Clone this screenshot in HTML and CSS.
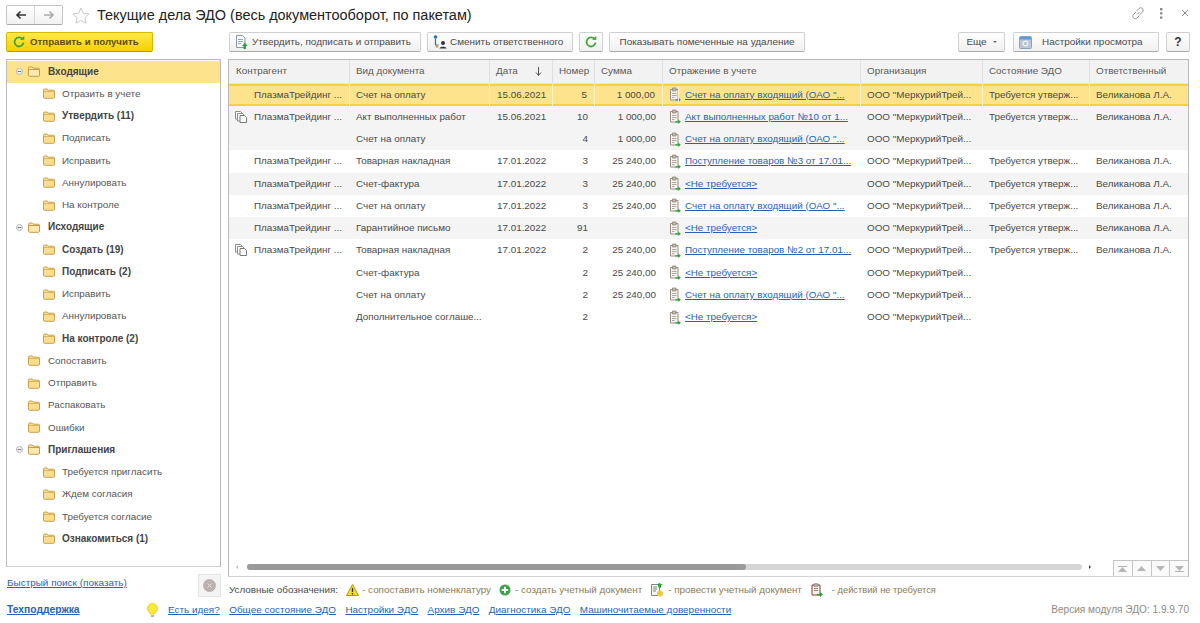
FILE: index.html
```html
<!DOCTYPE html>
<html lang="ru">
<head>
<meta charset="utf-8">
<title>Текущие дела ЭДО</title>
<link rel="stylesheet" href="styles.css">
</head>
<body>
<svg class="defs" width="0" height="0" aria-hidden="true">
  <symbol id="folder" viewBox="0 0 12 11">
    <path d="M.5 2.200c0-.7.4-1.200 1.100-1.200h2.600l1.100 1.200h5.100c.7 0 1.100.4 1.100 1v5.900c0 .7-.4 1.200-1.100 1.200H1.600C.9 10.300.5 9.800.5 9.100z" fill="#fbdd8e" stroke="#c9a04e"/>
    <path d="M1 3.500h10" stroke="#d9b565" stroke-width="1"/>
  </symbol>
  <symbol id="folder-open" viewBox="0 0 12 11">
    <path d="M.5 2.200c0-.7.4-1.200 1.100-1.200h2.600l1.100 1.200h5.100c.7 0 1.100.4 1.100 1v5.900c0 .7-.4 1.200-1.100 1.200H1.600C.9 10.300.5 9.800.5 9.100z" fill="#fde9ad" stroke="#c49a4c"/>
    <path d="M1 3.500h10" stroke="#c49a4c"/>
  </symbol>
  <symbol id="minus" viewBox="0 0 7 7">
    <circle cx="3.500" cy="3.500" r="3" fill="#f4f4f4" stroke="#b5b5b5"/>
    <path d="M1.700 3.500h3.600" stroke="#777"/>
  </symbol>
  <symbol id="clip" viewBox="0 0 12 15">
    <path d="M1.500 2.500h7.500v10.500h-7.500z" fill="#f6f3ee" stroke="#978d83"/>
    <path d="M3.500 1h3.500v3h-3.500z" fill="#c2b9ae" stroke="#8e857a" stroke-width=".8"/>
    <path d="M3 6.500h4.500M3 8.500h4.500M3 10.500h2.500" stroke="#b0a89f"/>
    <path d="M6.500 12.200h2.800V10.400l2.500 2.400-2.500 2.200v-1.400h-2.800z" fill="#2f9e3b"/>
  </symbol>
  <symbol id="copies" viewBox="0 0 12 12">
    <path d="M.5.5h5l1.500 1.500v6h-6.500z" fill="#fff" stroke="#8c8c8c"/>
    <path d="M2.500 2.500h5l1.500 1.500v6h-6.500z" fill="#fff" stroke="#8c8c8c"/>
    <path d="M5 4.500h4.500l2 2v5h-6.500z" fill="#fff" stroke="#777"/>
  </symbol>
  <symbol id="refresh" viewBox="0 0 12 12">
    <path d="M9.600 3.200A4.500 4.500 0 1 0 10.500 6.500" fill="none" stroke="#3fa535" stroke-width="1.800"/>
    <path d="M7 3.800h4.300V0z" fill="#3fa535"/>
  </symbol>
</svg>

<header class="topbar">
  <div class="nav-pair">
    <button class="nav-btn"><svg width="12" height="10" viewBox="0 0 12 10"><path d="M11 5H2.500M5.500 1.500 2 5l3.500 3.500" fill="none" stroke="#333" stroke-width="1.600"/></svg></button>
    <button class="nav-btn"><svg width="12" height="10" viewBox="0 0 12 10"><path d="M1 5h8.500M6.500 1.500 10 5 6.500 8.500" fill="none" stroke="#aaa" stroke-width="1.600"/></svg></button>
  </div>
  <svg class="star" width="18" height="17" viewBox="0 0 18 17"><path d="M9 1l2.400 5.300 5.600.6-4.200 3.800 1.200 5.600L9 13.400l-5 2.900 1.200-5.600L1 6.900l5.600-.6z" fill="#fff" stroke="#c9c9c9"/></svg>
  <h1 class="title">Текущие дела ЭДО (весь документооборот, по пакетам)</h1>
  <div class="window-tools">
    <svg width="14" height="14" viewBox="0 0 14 14"><path d="M6 8.500 8.500 6M5.500 5 8 2.500a2 2 0 0 1 3.500 3.500L9 8.500M8.500 9.500 6 12a2 2 0 0 1-3.500-3.500L5 6" fill="none" stroke="#999" stroke-width="1"/></svg>
    <svg class="dots" width="4" height="11" viewBox="0 0 4 11"><path d="M1 0h2.400v2.400H1zM1 4.200h2.400v2.400H1zM1 8.400h2.400v2.400H1z" fill="#8a8a8a"/></svg>
    <svg width="8" height="8" viewBox="0 0 8 8"><path d="M1 1l6 6M7 1 1 7" stroke="#888" stroke-width="1"/></svg>
  </div>
</header>

<div class="workspace">
  <aside class="side">
    <button class="primary-btn"><svg width="12" height="12"><use href="#refresh"/></svg><span>Отправить и получить</span></button>
    <nav class="tree">
      <div class="tree-row top open sel"><svg class="exp" width="7" height="7"><use href="#minus"/></svg><svg class="fld" width="12" height="11"><use href="#folder-open"/></svg><span class="b">Входящие</span></div>
      <div class="tree-row child"><svg class="fld" width="12" height="11"><use href="#folder"/></svg><span>Отразить в учете</span></div>
      <div class="tree-row child"><svg class="fld" width="12" height="11"><use href="#folder"/></svg><span class="b">Утвердить (11)</span></div>
      <div class="tree-row child"><svg class="fld" width="12" height="11"><use href="#folder"/></svg><span>Подписать</span></div>
      <div class="tree-row child"><svg class="fld" width="12" height="11"><use href="#folder"/></svg><span>Исправить</span></div>
      <div class="tree-row child"><svg class="fld" width="12" height="11"><use href="#folder"/></svg><span>Аннулировать</span></div>
      <div class="tree-row child"><svg class="fld" width="12" height="11"><use href="#folder"/></svg><span>На контроле</span></div>
      <div class="tree-row top open"><svg class="exp" width="7" height="7"><use href="#minus"/></svg><svg class="fld" width="12" height="11"><use href="#folder-open"/></svg><span class="b">Исходящие</span></div>
      <div class="tree-row child"><svg class="fld" width="12" height="11"><use href="#folder"/></svg><span class="b">Создать (19)</span></div>
      <div class="tree-row child"><svg class="fld" width="12" height="11"><use href="#folder"/></svg><span class="b">Подписать (2)</span></div>
      <div class="tree-row child"><svg class="fld" width="12" height="11"><use href="#folder"/></svg><span>Исправить</span></div>
      <div class="tree-row child"><svg class="fld" width="12" height="11"><use href="#folder"/></svg><span>Аннулировать</span></div>
      <div class="tree-row child"><svg class="fld" width="12" height="11"><use href="#folder"/></svg><span class="b">На контроле (2)</span></div>
      <div class="tree-row top"><svg class="fld" width="12" height="11"><use href="#folder"/></svg><span>Сопоставить</span></div>
      <div class="tree-row top"><svg class="fld" width="12" height="11"><use href="#folder"/></svg><span>Отправить</span></div>
      <div class="tree-row top"><svg class="fld" width="12" height="11"><use href="#folder"/></svg><span>Распаковать</span></div>
      <div class="tree-row top"><svg class="fld" width="12" height="11"><use href="#folder"/></svg><span>Ошибки</span></div>
      <div class="tree-row top open"><svg class="exp" width="7" height="7"><use href="#minus"/></svg><svg class="fld" width="12" height="11"><use href="#folder-open"/></svg><span class="b">Приглашения</span></div>
      <div class="tree-row child"><svg class="fld" width="12" height="11"><use href="#folder"/></svg><span>Требуется пригласить</span></div>
      <div class="tree-row child"><svg class="fld" width="12" height="11"><use href="#folder"/></svg><span>Ждем согласия</span></div>
      <div class="tree-row child"><svg class="fld" width="12" height="11"><use href="#folder"/></svg><span>Требуется согласие</span></div>
      <div class="tree-row child"><svg class="fld" width="12" height="11"><use href="#folder"/></svg><span class="b">Ознакомиться (1)</span></div>
    </nav>
    <div class="search-row">
      <a class="link" href="#">Быстрый поиск (показать)</a>
      <button class="clear-btn"><svg width="13" height="13" viewBox="0 0 13 13"><circle cx="6.500" cy="6.500" r="6.500" fill="#bcb1ae"/><path d="M4.500 4.500l4 4M8.500 4.500l-4 4" stroke="#e4dedc"/></svg></button>
    </div>
  </aside>

  <main class="content">
    <div class="toolbar">
      <button class="btn w-approve"><svg width="13" height="14" viewBox="0 0 13 14"><path d="M1.500.5h6l2.500 2.500v9.500h-8.500z" fill="#fafafa" stroke="#8c9aa5"/><path d="M3 4.500h5M3 6.500h5M3 8.500h3" stroke="#9aa7b0"/><path d="M8.500 14v-3H7l2.800-3.500 2.800 3.500H11v3z" fill="#35a143"/></svg><span>Утвердить, подписать и отправить</span></button>
      <button class="btn w-change"><svg width="15" height="14" viewBox="0 0 15 14"><circle cx="3.500" cy="2" r="1.800" fill="#2a6ebb"/><path d="M3.500 4v6h3" fill="none" stroke="#2a6ebb" stroke-width="1.200"/><circle cx="5" cy="11.500" r="1.300" fill="#d89a2b"/><circle cx="11" cy="8" r="2" fill="#333"/><path d="M7.500 13.500c0-2.500 7-2.500 7 0z" fill="#333"/></svg><span>Сменить ответственного</span></button>
      <button class="btn w-refresh"><svg width="12" height="12"><use href="#refresh"/></svg></button>
      <button class="btn w-show"><span>Показывать помеченные на удаление</span></button>
      <button class="btn w-more"><span>Еще</span><i class="caret"></i></button>
      <button class="btn w-settings"><svg width="13" height="13" viewBox="0 0 13 13"><rect x=".5" y=".5" width="12" height="12" rx="1" fill="#b9c6d3" stroke="#8fa2b5"/><rect x="1" y="1" width="11" height="2.500" fill="#5a9bd8"/><circle cx="6.500" cy="7.500" r="2.500" fill="none" stroke="#fff"/></svg><span>Настройки просмотра</span></button>
      <button class="btn w-help"><span>?</span></button>
    </div>

    <section class="grid-panel">
      <div class="row head">
        <div class="c">Контрагент</div><div class="c">Вид документа</div><div class="c sort">Дата<svg width="7" height="9" viewBox="0 0 7 9"><path d="M3.500 0v8M1 5.500 3.500 8.500 6 5.500" fill="none" stroke="#555"/></svg></div><div class="c">Номер</div><div class="c">Сумма</div><div class="c">Отражение в учете</div><div class="c">Организация</div><div class="c">Состояние ЭДО</div><div class="c">Ответственный</div>
      </div>
      <div class="rows">
        <div class="row sel">
          <div class="c ag">ПлазмаТрейдинг ...</div><div class="c">Счет на оплату</div><div class="c dt">15.06.2021</div><div class="c num">5</div><div class="c num">1 000,00</div>
          <div class="c doc"><svg width="12" height="15"><use href="#clip"/></svg><a class="link" href="#">Счет на оплату входящий (ОАО "...</a></div>
          <div class="c">ООО "МеркурийТрей...</div><div class="c">Требуется утверж...</div><div class="c">Великанова Л.А.</div>
        </div>
        <div class="row grey">
          <div class="c ag"><svg class="cp" width="12" height="12"><use href="#copies"/></svg>ПлазмаТрейдинг ...</div><div class="c">Акт выполненных работ</div><div class="c dt">15.06.2021</div><div class="c num">10</div><div class="c num">1 000,00</div>
          <div class="c doc"><svg width="12" height="15"><use href="#clip"/></svg><a class="link" href="#">Акт выполненных работ №10 от 1...</a></div>
          <div class="c">ООО "МеркурийТрей...</div><div class="c">Требуется утверж...</div><div class="c">Великанова Л.А.</div>
        </div>
        <div class="row grey">
          <div class="c ag"></div><div class="c">Счет на оплату</div><div class="c dt"></div><div class="c num">4</div><div class="c num">1 000,00</div>
          <div class="c doc"><svg width="12" height="15"><use href="#clip"/></svg><a class="link" href="#">Счет на оплату входящий (ОАО "...</a></div>
          <div class="c">ООО "МеркурийТрей...</div><div class="c"></div><div class="c"></div>
        </div>
        <div class="row">
          <div class="c ag">ПлазмаТрейдинг ...</div><div class="c">Товарная накладная</div><div class="c dt">17.01.2022</div><div class="c num">3</div><div class="c num">25 240,00</div>
          <div class="c doc"><svg width="12" height="15"><use href="#clip"/></svg><a class="link" href="#">Поступление товаров №3 от 17.01...</a></div>
          <div class="c">ООО "МеркурийТрей...</div><div class="c">Требуется утверж...</div><div class="c">Великанова Л.А.</div>
        </div>
        <div class="row grey">
          <div class="c ag">ПлазмаТрейдинг ...</div><div class="c">Счет-фактура</div><div class="c dt">17.01.2022</div><div class="c num">3</div><div class="c num">25 240,00</div>
          <div class="c doc"><svg width="12" height="15"><use href="#clip"/></svg><a class="link" href="#">&lt;Не требуется&gt;</a></div>
          <div class="c">ООО "МеркурийТрей...</div><div class="c">Требуется утверж...</div><div class="c">Великанова Л.А.</div>
        </div>
        <div class="row">
          <div class="c ag">ПлазмаТрейдинг ...</div><div class="c">Счет на оплату</div><div class="c dt">17.01.2022</div><div class="c num">3</div><div class="c num">25 240,00</div>
          <div class="c doc"><svg width="12" height="15"><use href="#clip"/></svg><a class="link" href="#">Счет на оплату входящий (ОАО "...</a></div>
          <div class="c">ООО "МеркурийТрей...</div><div class="c">Требуется утверж...</div><div class="c">Великанова Л.А.</div>
        </div>
        <div class="row grey">
          <div class="c ag">ПлазмаТрейдинг ...</div><div class="c">Гарантийное письмо</div><div class="c dt">17.01.2022</div><div class="c num">91</div><div class="c num"></div>
          <div class="c doc"><svg width="12" height="15"><use href="#clip"/></svg><a class="link" href="#">&lt;Не требуется&gt;</a></div>
          <div class="c">ООО "МеркурийТрей...</div><div class="c">Требуется утверж...</div><div class="c">Великанова Л.А.</div>
        </div>
        <div class="row">
          <div class="c ag"><svg class="cp" width="12" height="12"><use href="#copies"/></svg>ПлазмаТрейдинг ...</div><div class="c">Товарная накладная</div><div class="c dt">17.01.2022</div><div class="c num">2</div><div class="c num">25 240,00</div>
          <div class="c doc"><svg width="12" height="15"><use href="#clip"/></svg><a class="link" href="#">Поступление товаров №2 от 17.01...</a></div>
          <div class="c">ООО "МеркурийТрей...</div><div class="c">Требуется утверж...</div><div class="c">Великанова Л.А.</div>
        </div>
        <div class="row">
          <div class="c ag"></div><div class="c">Счет-фактура</div><div class="c dt"></div><div class="c num">2</div><div class="c num">25 240,00</div>
          <div class="c doc"><svg width="12" height="15"><use href="#clip"/></svg><a class="link" href="#">&lt;Не требуется&gt;</a></div>
          <div class="c">ООО "МеркурийТрей...</div><div class="c"></div><div class="c"></div>
        </div>
        <div class="row">
          <div class="c ag"></div><div class="c">Счет на оплату</div><div class="c dt"></div><div class="c num">2</div><div class="c num">25 240,00</div>
          <div class="c doc"><svg width="12" height="15"><use href="#clip"/></svg><a class="link" href="#">Счет на оплату входящий (ОАО "...</a></div>
          <div class="c">ООО "МеркурийТрей...</div><div class="c"></div><div class="c"></div>
        </div>
        <div class="row">
          <div class="c ag"></div><div class="c">Дополнительное соглаше...</div><div class="c dt"></div><div class="c num">2</div><div class="c num"></div>
          <div class="c doc"><svg width="12" height="15"><use href="#clip"/></svg><a class="link" href="#">&lt;Не требуется&gt;</a></div>
          <div class="c">ООО "МеркурийТрей...</div><div class="c"></div><div class="c"></div>
        </div>
      </div>
      <div class="scroll-strip">
        <i class="arrow left"></i>
        <div class="track"><div class="thumb"></div></div>
        <i class="arrow right"></i>
        <div class="pager">
          <button class="pg"><svg width="9" height="6" viewBox="0 0 9 6"><path d="M0 0h9v1H0zM4.500 1 9 6H0z" fill="#b5b5b5"/></svg></button>
          <button class="pg"><svg width="9" height="5" viewBox="0 0 9 5"><path d="M4.500 0 9 5H0z" fill="#b5b5b5"/></svg></button>
          <button class="pg"><svg width="9" height="5" viewBox="0 0 9 5"><path d="M4.500 5 9 0H0z" fill="#b5b5b5"/></svg></button>
          <button class="pg"><svg width="9" height="6" viewBox="0 0 9 6"><path d="M0 5h9v1H0zM4.500 5 9 0H0z" fill="#b5b5b5"/></svg></button>
        </div>
      </div>
    </section>

    <div class="legend">
      <span class="lg-title">Условные обозначения:</span>
      <svg class="lg-i1" width="13" height="12" viewBox="0 0 13 12"><path d="M6.500.5 12.500 11.500H.5z" fill="#f6d92b" stroke="#b59a1a"/><path d="M6.500 4v4M6.500 9v1.500" stroke="#333" stroke-width="1.300"/></svg>
      <span>- сопоставить номенклатуру</span>
      <svg class="lg-i2" width="12" height="12" viewBox="0 0 12 12"><circle cx="6" cy="6" r="5.500" fill="#3da24a"/><path d="M6 2.800v6.400M2.800 6h6.400" stroke="#fff" stroke-width="2"/></svg>
      <span>- создать учетный документ</span>
      <svg class="lg-i3" width="13" height="14" viewBox="0 0 13 14"><path d="M.5 1.500h8v11h-8z" fill="#f6f6f0" stroke="#7f8a7f"/><path d="M2 4h4M2 6h4M2 8h3" stroke="#7f8a7f"/><path d="M7 4V2H5l3.500-2L12 2h-2v3z" fill="#33a043"/><circle cx="9" cy="10.500" r="3" fill="#edc93c"/></svg>
      <span>- провести учетный документ</span>
      <svg class="lg-i4" width="12" height="14" viewBox="0 0 12 14"><path d="M1 2h8v10H1z" fill="#f5f2ea" stroke="#8d3a33"/><path d="M3 .8h4v2.500H3z" fill="#bbb" stroke="#7d6f63" stroke-width=".7"/><path d="M3 5.500h4M3 7.500h4" stroke="#8d857c"/><path d="M6 11h3V9l3 2.500L9 14v-1.500H6z" fill="#2f9e3b"/></svg>
      <span class="lg-last">- действий не требуется</span>
    </div>
  </main>
</div>

<footer class="footer">
  <a class="link support" href="#">Техподдержка</a>
  <svg class="bulb" width="11" height="15" viewBox="0 0 11 15"><path d="M5.500.5a5 5 0 0 1 3 9c-.6.5-.8 1-.8 1.500H3.300c0-.5-.2-1-.8-1.500a5 5 0 0 1 3-9z" fill="#f9e93b" stroke="#e8d22a"/><path d="M3.800 12h3.400v2H3.800z" fill="#b9b9a6"/></svg>
  <nav class="foot-links">
    <a class="link" href="#">Есть идея?</a>
    <a class="link" href="#">Общее состояние ЭДО</a>
    <a class="link" href="#">Настройки ЭДО</a>
    <a class="link" href="#">Архив ЭДО</a>
    <a class="link" href="#">Диагностика ЭДО</a>
    <a class="link" href="#">Машиночитаемые доверенности</a>
  </nav>
  <span class="version">Версия модуля ЭДО: 1.9.9.70</span>
</footer>
</body>
</html>
```

FILE: styles.css
```css
* { box-sizing: border-box; }
html, body { margin: 0; padding: 0; }
body {
  width: 1200px;
  height: 623px;
  overflow: hidden;
  background: #fff;
  color: #4a4a4a;
  font: 9.85px/14px "Liberation Sans", Arial, sans-serif;
  display: flex;
  flex-direction: column;
}
.defs { position: absolute; }
button { font: inherit; color: inherit; padding: 0; margin: 0; cursor: default; white-space: nowrap; }
svg { display: block; flex: none; }
.link { color: #2a5fb8; text-decoration: underline; font-size: 9.95px; }
.doc .link { font-size: 9.85px; }

.topbar { height: 32px; flex: none; display: flex; align-items: flex-start; padding: 5px 11px 0 6px; }
.nav-pair { display: flex; width: 57px; height: 20px; border: 1px solid #c5c5c5; border-bottom-color: #a8a8a8; border-radius: 2px; }
.nav-btn { flex: 1; border: 0; background: linear-gradient(#fff, #f1f1f1); display: flex; align-items: center; justify-content: center; }
.nav-btn + .nav-btn { border-left: 1px solid #d5d5d5; }
.star { margin: 2px 0 0 9px; }
.title { margin: 1px 0 0 7px; font-size: 14.45px; line-height: 18px; font-weight: 400; color: #222; }
.window-tools { margin-left: auto; display: flex; align-items: center; gap: 18px; margin-top: 1px; }
.dots { margin-left: -4px; }

.workspace { flex: 1; display: flex; min-height: 0; padding: 0 11px 0 6px; gap: 7px; }
.side { width: 215px; flex: none; display: flex; flex-direction: column; }
.primary-btn {
  width: 147px; height: 20px; display: flex; align-items: center; gap: 5px; padding-left: 6px;
  background: linear-gradient(#ffe94a, #f7d000); border: 1px solid #d7b800; border-bottom-color: #b79c00;
  border-radius: 2px; color: #5a4e00; font-size: 9.7px; font-weight: 700;
}
.tree { height: 508px; margin-top: 7px; border: 1px solid #b9b9b9; border-bottom-color: #cfcfcf; padding-top: .5px; overflow: hidden; }
.tree-row { height: 22.25px; display: flex; align-items: center; color: #555; }
.tree-row .b { font-weight: 700; color: #444; font-size: 10px; }
.tree-row.top { padding-left: 21px; }
.tree-row.top.open { padding-left: 9px; }
.tree-row.child { padding-left: 36px; }
.tree-row .exp { margin-right: 5px; }
.tree-row .fld { margin-right: 8px; }
.tree-row.child .fld { margin-right: 7px; }
.tree-row.sel { background: #fde38b; }
.search-row { display: flex; justify-content: space-between; align-items: flex-start; margin-top: 7px; padding-left: 1px; }
.search-row .link { margin-top: 2px; }
.clear-btn { width: 23px; height: 23px; border: 1px solid #e4e4e4; background: #f4f4f4; display: flex; align-items: center; justify-content: center; }

.content { flex: 1; min-width: 0; display: flex; flex-direction: column; }
.toolbar { height: 20px; flex: none; display: flex; padding-left: 1px; font-size: 9.95px; }
.btn {
  height: 20px; display: flex; align-items: center; flex: none;
  background: linear-gradient(#fff, #f0f0f0); border: 1px solid #cfcfcf; border-bottom-color: #a9a9a9; border-radius: 2px;
}
.w-approve { width: 192px; padding-left: 5px; gap: 4px; }
.w-change { width: 146px; margin-left: 6px; padding-left: 4px; gap: 3px; }
.w-refresh { width: 24px; margin-left: 6px; justify-content: center; }
.w-show { width: 196px; margin-left: 6px; justify-content: center; }
.w-more { width: 47px; margin-left: 153px; justify-content: center; gap: 6px; }
.caret { width: 0; height: 0; border: 2.500px solid transparent; border-top-color: #666; border-bottom: 0; }
.w-settings { width: 146px; margin-left: 8px; padding-left: 5px; gap: 10px; }
.w-help { width: 24px; margin-left: 7px; justify-content: center; font-weight: 700; font-size: 12px; color: #333; }

.grid-panel { height: 518px; margin-top: 7px; flex: none; border: 1px solid #b9b9b9; border-bottom-color: #d3d3d3; display: flex; flex-direction: column; }
.row { display: grid; grid-template-columns: 121px 140px 63px 42px 68px 198px 122px 107px 1fr; height: 22.25px; align-items: stretch; }
.c { padding: 0 6px; display: flex; align-items: center; white-space: nowrap; overflow: hidden; min-width: 0; }
.head { height: 23.5px; flex: none; background: #f2f2f2; border-bottom: 1px solid #e4e4e4; color: #5a5a5a; }
.head .c { border-right: 1px solid #e0e0e0; }
.head .c:first-child { padding-left: 7px; }
.head .c:last-child { border-right: 0; }
.head .sort { justify-content: space-between; padding-right: 10px; }
.rows { flex: 1; min-height: 0; }
.grey { background: #f4f4f4; }
.row.sel { background: #fde38b; box-shadow: inset 0 2px 0 #f8cf3e, inset 0 -2px 0 #f8cf3e; }
.row.sel .c { border-right: 1px solid #fff3c8; }
.row.sel .c:last-child { border-right: 0; }
.row.sel .doc { position: relative; }
.row.sel .doc::after { content: ""; position: absolute; left: 15px; top: 2px; bottom: 2px; width: 1px; background: #fff3c8; }
.ag { padding-left: 25px; position: relative; }
.ag .cp { position: absolute; left: 6px; top: 5px; }
.num { justify-content: flex-end; padding-right: 7px; }
.dt { padding-left: 7px; }
.doc { gap: 4px; padding-left: 6px; }
.scroll-strip { height: 19px; flex: none; display: flex; align-items: center; padding-left: 7px; }
.arrow { width: 0; height: 0; border: 2.500px solid transparent; flex: none; }
.arrow.left { border-right-color: #bbb; border-left: 0; margin-right: 9px; }
.arrow.right { border-left-color: #444; border-right: 0; margin-left: 7px; }
.track { width: 835px; height: 6px; background: #d6d6d6; border-radius: 3px; flex: none; }
.thumb { width: 499px; height: 6px; background: #9a9a9a; border-radius: 3px; }
.pager { margin-left: auto; display: flex; height: 16px; align-self: flex-end; }
.pg { width: 18.75px; height: 16px; border: 1px solid #c6c6c6; border-bottom: 0; border-right: 0; background: #fafafa; display: flex; align-items: center; justify-content: center; }

.legend { height: 20px; flex: none; display: flex; align-items: center; padding-left: 1px; margin-top: 3px; color: #8c7a54; }
.lg-title { color: #4a4a4a; }
.lg-i1 { margin: 0 3px 0 8px; }
.lg-i2 { margin: 0 4px 0 8px; }
.lg-i3 { margin: 0 4px 0 9px; }
.lg-i4 { margin: 0 9px 0 9px; }
.lg-last { font-size: 9.3px; }

.footer { height: 24px; flex: none; display: flex; align-items: center; padding: 0 11px 2px 7px; }
.support { font-weight: 700; width: 140px; font-size: 10.3px; }
.bulb { margin-right: 10px; }
.foot-links { display: flex; gap: 9.4px; }
.version { margin-left: auto; color: #8f8a80; font-size: 10.1px; }
```
